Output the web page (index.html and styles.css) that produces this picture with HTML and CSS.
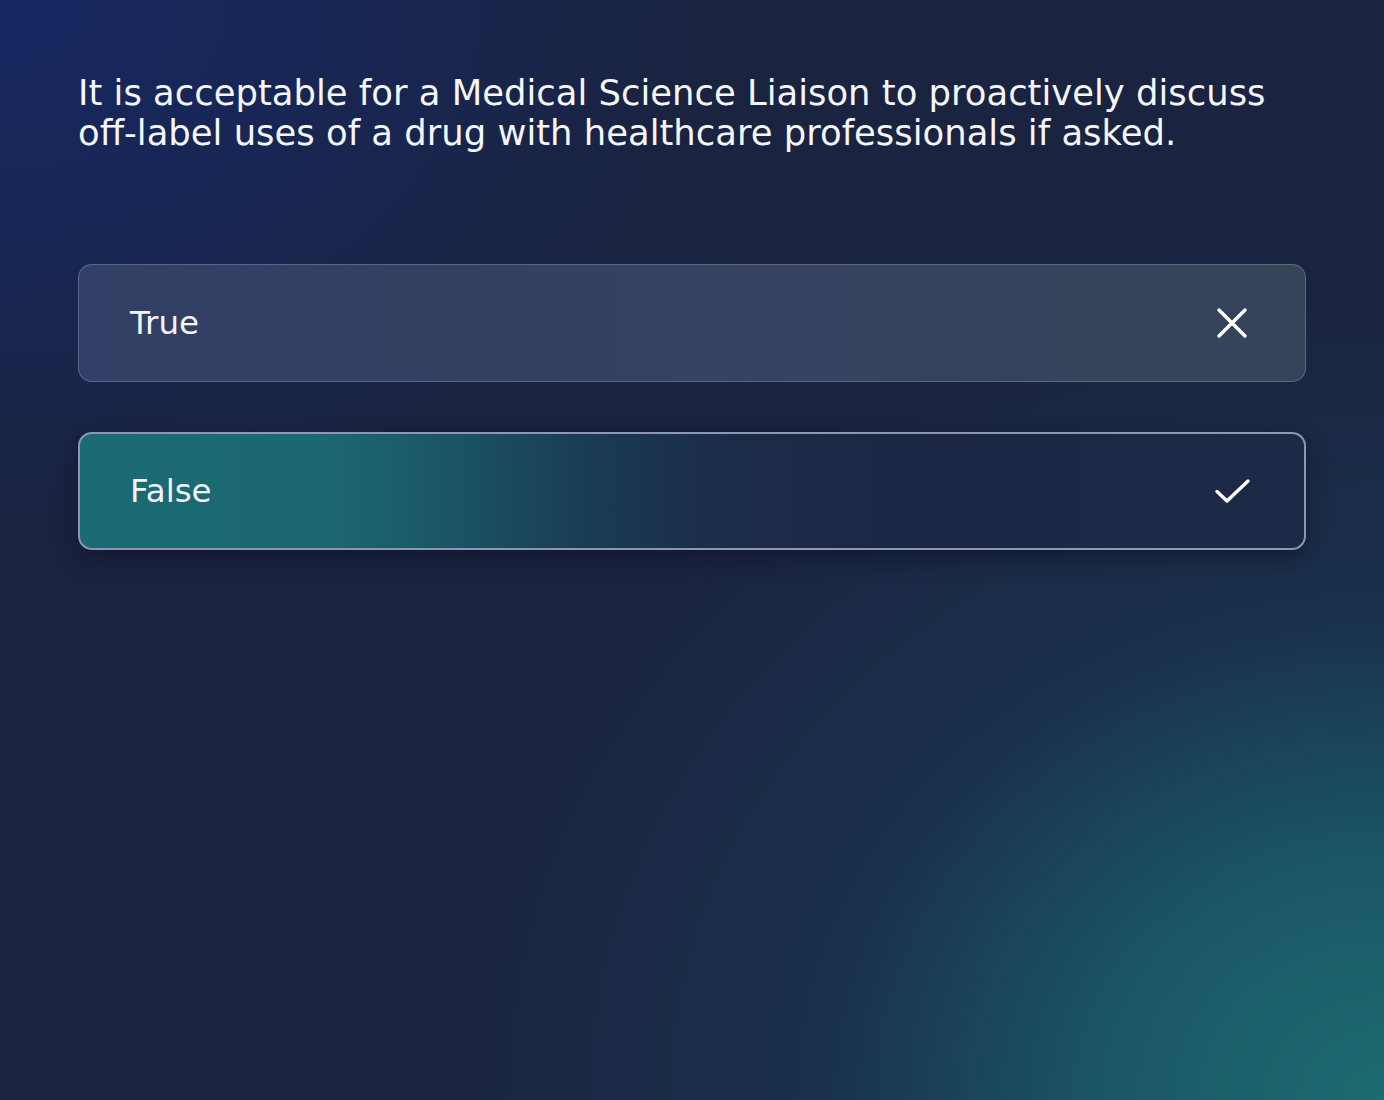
FILE: index.html
```html
<!DOCTYPE html>
<html lang="en">
<head>
<meta charset="utf-8">
<title>Quiz</title>
<link rel="stylesheet" href="styles.css">
</head>
<body>
<main class="screen">
  <h1 class="question">It is acceptable for a Medical Science Liaison to proactively discuss off-label uses of a drug with healthcare professionals if asked.</h1>
  <div class="options">
    <div class="option option-wrong">
      <span class="label">True</span>
      <svg class="icon icon-x" width="32" height="32" viewBox="0 0 32 32" aria-hidden="true">
        <path d="M3 3 L29 29 M29 3 L3 29" stroke="#fff" stroke-width="3.4" stroke-linecap="round" fill="none"/>
      </svg>
    </div>
    <div class="option option-correct">
      <span class="label">False</span>
      <svg class="icon icon-check" width="38" height="30" viewBox="0 0 38 30" aria-hidden="true">
        <path d="M3 15.5 L13 25 L34 5" stroke="#fff" stroke-width="3.4" stroke-linecap="round" stroke-linejoin="round" fill="none"/>
      </svg>
    </div>
  </div>
</main>
</body>
</html>
```
FILE: styles.css
```css
html, body {
  margin: 0;
  padding: 0;
  height: 100%;
}
body {
  font-family: "DejaVu Sans", "Open Sans", sans-serif;
  color: #fff;
  background-color: #1a2340;
  background-image:
    radial-gradient(ellipse 950px 820px at 100% 100%, rgba(28,108,114,1) 0%, rgba(27,98,108,0.8) 30%, rgba(26,62,86,0.5) 60%, rgba(26,35,64,0) 100%),
    radial-gradient(ellipse 700px 520px at 0% 0%, rgba(22,40,98,1) 0%, rgba(22,40,98,0.6) 45%, rgba(26,35,64,0) 100%);
  background-repeat: no-repeat;
  min-height: 1100px;
}
.screen {
  padding: 73px 78px 0 78px;
  box-sizing: border-box;
  width: 1384px;
}
.question {
  margin: 0;
  font-weight: 400;
  font-size: 35.4px;
  line-height: 40px;
  letter-spacing: 0;
  color: #f4f6fa;
  max-width: 1215px;
}
.options {
  margin-top: 111px;
  display: flex;
  flex-direction: column;
  gap: 50px;
}
.option {
  height: 118px;
  box-sizing: border-box;
  border-radius: 14px;
  display: flex;
  align-items: center;
  justify-content: space-between;
  padding: 0 57px 0 51px;
}
.label {
  font-size: 32.5px;
  letter-spacing: 0;
  color: #f2f4f8;
}
.option-wrong {
  background: linear-gradient(90deg, #323f66 0%, #36425f 60%, #364458 100%);
  border: 1.5px solid rgba(120,135,175,0.55);
}
.option-correct {
  background: linear-gradient(90deg, #1b6a74 0%, #1b6872 20%, #1a5266 31%, #1a3a54 42%, #1b2c49 53%, #1b2744 70%, #1c2a48 100%);
  border: 2px solid #8d97af;
  box-shadow: 0 8px 22px rgba(8,12,28,0.45);
  padding-left: 50px;
}
.icon {
  display: block;
  flex: none;
}
.icon-check {
  margin-right: -5px;
}
```
